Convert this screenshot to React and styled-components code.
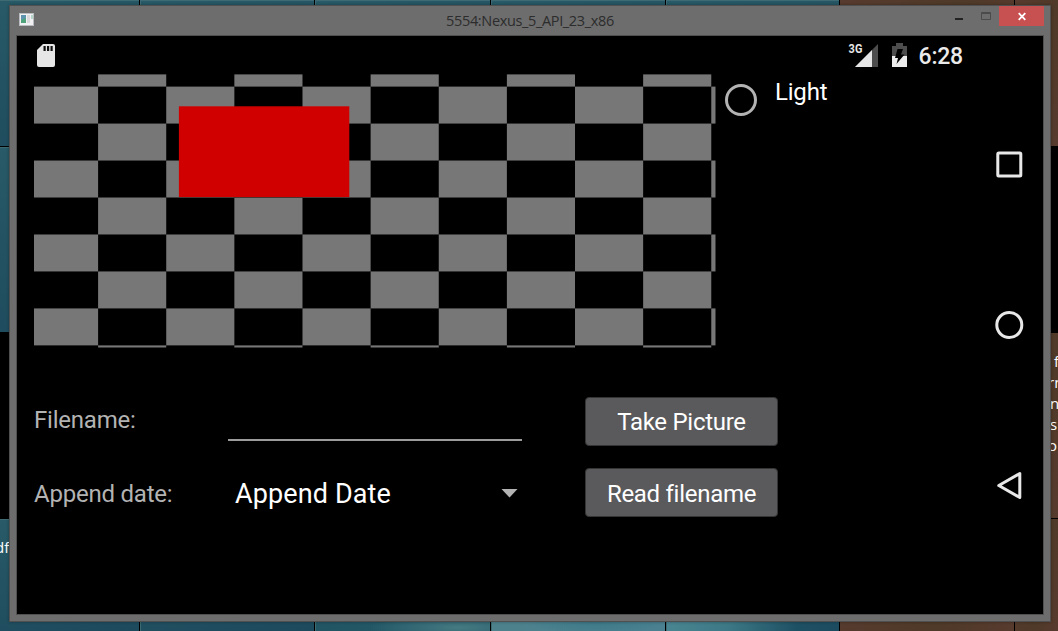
import React from 'react';
import styled, { createGlobalStyle } from 'styled-components';

const Global = createGlobalStyle`
  * { box-sizing: border-box; }
  body { margin: 0; background: #000; overflow: hidden; font-family: Roboto, "Liberation Sans", sans-serif; }
`;

const Desktop = styled.main`
  position: relative;
  width: 1058px;
  height: 631px;
  overflow: hidden;
  display: grid;
  grid-template-columns: 139px 174px 175px 174px 173px 174px 43px;
  grid-template-rows: 146px 185px 185px 112px;
  gap: 1px;
  background: #000;
`;

const tones = {
  teal: 'linear-gradient(165deg, #285a67, #1d4a5d)',
  brown: 'linear-gradient(100deg, #573b2e, #4f3928 60%, #573b2e)',
  black: '#000',
  mist: 'radial-gradient(ellipse 90px 14px at 82% 97%, #457a82, transparent), linear-gradient(90deg, #225564, #245a68)',
  cloud: 'radial-gradient(ellipse 70px 12px at 60% 92%, #3d7888, transparent), linear-gradient(90deg, #4d828c, #4a8090)',
  fade: 'linear-gradient(100deg, #4a8592 8%, #3c7885 42%, #1e5063 78%, #1c4b60)',
};

const Tile = styled.div`
  background: ${({ $tone }) => tones[$tone]};
  box-shadow: inset ${({ $first }) => ($first ? 0 : 1)}px 1px 0
    ${({ $tone }) => ($tone === 'black' || $tone === 'brown' ? 'transparent' : '#3e6b73')};
`;

const Note = styled.div`
  position: absolute;
  left: ${({ $x }) => $x}px;
  top: ${({ $y }) => $y}px;
  color: #fff;
  font: 400 15px/21px "Open Sans", "Noto Sans", sans-serif;
  white-space: pre;
`;

const Window = styled.section`
  position: absolute;
  left: 9px;
  top: 5px;
  width: 1042px;
  height: 617px;
  display: flex;
  flex-direction: column;
  background: #6d6d6d;
  border: 1px solid #505050;
  padding: 0 6px 6px;
  box-shadow: 0 0 3px rgba(0, 0, 0, 0.3);
`;

const TitleBar = styled.header`
  display: grid;
  grid-template-columns: 150px 1fr 150px;
  height: 29px;
`;

const AppIcon = styled.svg`
  margin: 7px 0 0 3px;
`;

const Title = styled.h1`
  margin: 0;
  text-align: center;
  color: #2c2c2c;
  font: 400 14.5px/30px "Open Sans", "Noto Sans", sans-serif;
  letter-spacing: -0.35px;
  white-space: nowrap;
`;

const Controls = styled.div`
  display: flex;
  justify-content: flex-end;
  align-items: flex-start;
`;

const Control = styled.button`
  width: ${({ $close }) => ($close ? 45 : 27)}px;
  height: 20px;
  padding: 0;
  border: 0;
  display: flex;
  background: ${({ $close }) => ($close ? '#c75050' : 'transparent')};
`;

const Screen = styled.div`
  flex: 1;
  display: flex;
  background: #000;
  border: 1px solid #505050;
`;

const Main = styled.div`
  flex: 1;
  display: flex;
  flex-direction: column;
`;

const StatusBar = styled.div`
  height: 38px;
  display: flex;
  align-items: flex-start;
  justify-content: space-between;
  padding: 8px 12px 0 20px;
`;

const StatusRight = styled.div`
  display: flex;
  align-items: flex-start;
`;

const Network = styled.span`
  font: 700 13px/14px Roboto, sans-serif;
  color: #e6e6e6;
  transform: scaleX(0.84);
  transform-origin: right;
  margin: -2px -8px 0 0;
`;

const Battery = styled.svg`
  margin: -1px 0 0 14px;
`;

const Clock = styled.time`
  margin: -1px 0 0 12px;
  font: 500 23px/28px Roboto, sans-serif;
  letter-spacing: -0.2px;
  color: #eaeaea;
`;

const Camera = styled.div`
  display: flex;
  align-items: flex-start;
  padding-left: 17px;
  height: 323px;
`;

const Radio = styled.span`
  width: 32px;
  height: 32px;
  margin: 10px 0 0 9px;
  border: 3px solid #b3b3b3;
  border-radius: 50%;
`;

const RadioLabel = styled.label`
  margin: 4px 0 0 18px;
  font-size: 24px;
  line-height: 28px;
  letter-spacing: -0.2px;
  color: #fff;
`;

const Row = styled.div`
  display: grid;
  grid-template-columns: 194px 294px 192px;
  padding-left: 17px;
  height: ${({ $last }) => ($last ? 49 : 71)}px;
`;

const Label = styled.label`
  padding-top: ${({ $top }) => $top}px;
  font-size: 24px;
  line-height: 28px;
  letter-spacing: -0.22px;
  color: #b3b3b3;
`;

const Field = styled.input`
  width: 294px;
  height: 44px;
  padding: 0;
  border: 0;
  border-bottom: 2px solid #9c9c9c;
  background: transparent;
  color: #fff;
  outline: 0;
`;

const Select = styled.div`
  display: flex;
  justify-content: space-between;
  align-items: flex-start;
  padding: 9px 4px 0 7px;
  color: #fff;
  font-size: 27px;
  line-height: 34px;
  letter-spacing: 0.12px;
`;

const Caret = styled.svg`
  margin-top: 12px;
`;

const Button = styled.button`
  width: 193px;
  height: 49px;
  margin-left: 63px;
  padding: ${({ $drop }) => $drop || 0}px 0 0;
  border: 1px solid #353536;
  border-radius: 4px;
  background: #5a5a5c;
  color: #fff;
  font: 400 24px/28px Roboto, sans-serif;
  letter-spacing: -0.28px;
  white-space: nowrap;
`;

const NavBar = styled.nav`
  width: 68px;
  display: flex;
  flex-direction: column;
  align-items: center;
  gap: 129px;
  padding-top: 112px;
`;

const backdrop = [
  ['teal', 'teal', 'teal', 'teal', 'teal', 'brown', 'brown'],
  ['teal', 'black', 'black', 'black', 'black', 'black', 'black'],
  ['black', 'black', 'black', 'black', 'black', 'black', 'brown'],
  ['teal', 'teal', 'mist', 'cloud', 'fade', 'brown', 'brown'],
];

const colEdges = [0, ...Array.from({ length: 10 }, (_, i) => 64.1 + i * 68.13), 681.5];
const rowEdges = [0.4, ...Array.from({ length: 8 }, (_, i) => 12.6 + i * 36.97), 273.5];

function Preview() {
  const cells = [];
  for (let r = 0; r < rowEdges.length - 1; r++) {
    for (let c = 0; c < colEdges.length - 1; c++) {
      if ((r + c) % 2) {
        cells.push(
          <rect key={`${r}-${c}`} x={colEdges[c]} y={rowEdges[r]} width={colEdges[c + 1] - colEdges[c]} height={rowEdges[r + 1] - rowEdges[r]} />
        );
      }
    }
  }
  return (
    <svg width="682" height="274" viewBox="0 0 682 274">
      <g fill="#777">{cells}</g>
      <rect x="144.9" y="32.3" width="170.4" height="90.8" fill="#d10000" />
    </svg>
  );
}

export default function App() {
  return (
    <Desktop>
      <Global />
      {backdrop.flatMap((row, r) => row.map((tone, c) => <Tile key={`${r}-${c}`} $tone={tone} $first={c === 0} />))}
      <Note $x={-5} $y={537}>df</Note>
      <Note $x={1054} $y={351}>f</Note>
      <Note $x={1048} $y={372}>rn</Note>
      <Note $x={1050} $y={393}>n</Note>
      <Note $x={1050} $y={414}>s</Note>
      <Note $x={1048} $y={435}>o</Note>

      <Window>
        <TitleBar>
          <AppIcon width="16" height="13" viewBox="0 0 16 13">
            <rect x=".5" y=".5" width="14" height="12" fill="#f1f1f3" stroke="#b9bdc2" />
            <rect x="2" y="2" width="5" height="8" fill="#5c93ae" />
            <path d="M2 10V7l5-2v5z" fill="#4fa37c" />
            <rect x="8" y="2" width="3" height="8" fill="#d8d8dd" />
            <rect x="12" y="2" width="2" height="4" fill="#b4d6c8" />
          </AppIcon>
          <Title>5554:Nexus_5_API_23_x86</Title>
          <Controls>
            <Control aria-label="Minimize">
              <svg width="27" height="20"><rect x="10" y="12" width="8" height="2" fill="#222" /></svg>
            </Control>
            <Control aria-label="Maximize">
              <svg width="27" height="20"><path d="M9.5 6.5h9v7h-9zM9 7.5h10" fill="none" stroke="#4b4b4b" /></svg>
            </Control>
            <Control $close aria-label="Close">
              <svg width="45" height="20"><path d="M19.7 7.2l6.6 6.6M26.3 7.2l-6.6 6.6" stroke="#fff" strokeWidth="1.8" /></svg>
            </Control>
          </Controls>
        </TitleBar>

        <Screen>
          <Main>
            <StatusBar>
              <svg width="18" height="23" viewBox="0 0 18 23">
                <path d="M6 0h10q2 0 2 2v19q0 2-2 2H2q-2 0-2-2V6z" fill="#e6e6e6" />
                <path d="M6.5 2h2.2v5H6.5zM10 2h2.2v5H10zM13.5 2h2.2v5h-2.2z" fill="#111" />
              </svg>
              <StatusRight>
                <Network>3G</Network>
                <svg width="23" height="23" viewBox="0 0 23 23">
                  <path d="M23 0v23H0z" fill="#4d4d4d" />
                  <path d="M17 6v17H0z" fill="#e6e6e6" />
                </svg>
                <Battery width="15" height="24" viewBox="0 0 15 24">
                  <path d="M4 0h7v3h4v10H0V3h4z" fill="#4d4d4d" />
                  <path d="M0 13h15v11H0z" fill="#ededed" />
                  <path d="M5.5 6H11L9 11.5h3.5L4.5 21l1.5-6H3z" fill="#000" />
                </Battery>
                <Clock>6:28</Clock>
              </StatusRight>
            </StatusBar>
            <Camera>
              <Preview />
              <Radio role="radio" aria-checked="false" />
              <RadioLabel>Light</RadioLabel>
            </Camera>
            <Row>
              <Label $top={9}>Filename:</Label>
              <Field aria-label="Filename" />
              <Button $drop={1}>Take Picture</Button>
            </Row>
            <Row $last>
              <Label $top={12}>Append date:</Label>
              <Select>
                <span>Append Date</span>
                <Caret width="17" height="9"><path d="M.5 0h16l-8 8.5z" fill="#b3b3b3" /></Caret>
              </Select>
              <Button $drop={2}>Read filename</Button>
            </Row>
          </Main>
          <NavBar>
            <svg width="32" height="32"><rect x="4.8" y="4.9" width="23" height="23" rx="1" fill="none" stroke="#e8e8e8" strokeWidth="3" /></svg>
            <svg width="32" height="32"><circle cx="16.3" cy="16" r="12.5" fill="none" stroke="#e8e8e8" strokeWidth="3" /></svg>
            <svg width="32" height="32"><path d="M5.800 15.500L26.800 3.500v24z" fill="none" stroke="#e8e8e8" strokeWidth="3" strokeLinejoin="round" /></svg>
          </NavBar>
        </Screen>
      </Window>
    </Desktop>
  );
}
